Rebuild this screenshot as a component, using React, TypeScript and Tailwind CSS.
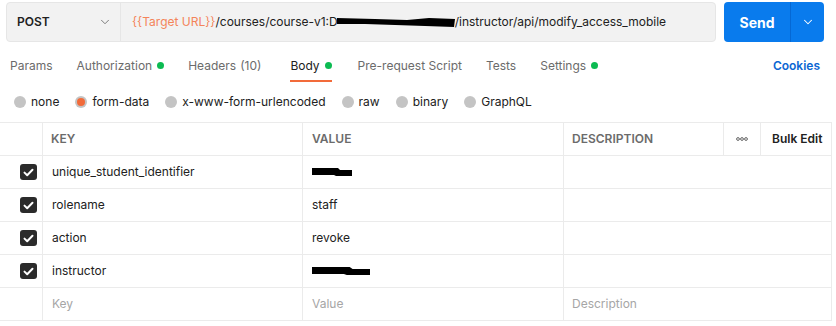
import React from 'react';
import { ChevronDown } from 'lucide-react';

const Dot = () => <span className="ml-[5px] inline-block h-[7px] w-[7px] rounded-full bg-[#0cbb52]" />;

const Tab = ({ label, active, dot, extra, cls = '' }: { label: string; active?: boolean; dot?: boolean; extra?: string; cls?: string }) => (
  <div className={`flex h-full items-center border-b-2 pt-[1px] ${cls} ${active ? 'border-[#f26b3a] text-[#212121]' : 'border-transparent text-[#6b6b6b]'}`}>
    <span>{label}</span>
    {extra && <span className="ml-[4px]">{extra}</span>}
    {dot && <Dot />}
  </div>
);

const Radio = ({ label, checked }: { label: string; checked?: boolean }) => (
  <label className="flex items-center gap-[5px]">
    <span className="flex h-[12px] w-[12px] items-center justify-center rounded-full bg-[#c4c4c4]">
      {checked && <span className="h-[8px] w-[8px] rounded-full bg-[#f26b3a]" />}
    </span>
    <span>{label}</span>
  </label>
);

const Check = () => (
  <span className="flex h-[16px] w-[17px] items-center justify-center rounded-[3px] bg-[#2b2b2b]">
    <svg width="11" height="9" viewBox="0 0 11 9" fill="none">
      <path d="M1.5 4.6 4.2 7.2 9.5 1.8" stroke="white" strokeWidth="2" strokeLinecap="round" strokeLinejoin="round" />
    </svg>
  </span>
);

const Redact = ({ w }: { w: number }) => (
  <svg width={w} height="10" viewBox={`0 0 ${w} 10`}>
    <path d={`M0 1 L${w * 0.65} 1 L${w * 0.7} 3 L${w} 3 L${w} 9 L${w * 0.6} 9 L${w * 0.55} 8 L0 8 Z`} fill="black" />
  </svg>
);

const rows = [
  { key: 'unique_student_identifier', value: null as string | null, redact: 40 },
  { key: 'rolename', value: 'staff' },
  { key: 'action', value: 'revoke' },
  { key: 'instructor', value: null, redact: 58 },
];

export default function App() {
  return (
    <div className="h-[326px] w-[836px] bg-white text-[12px] text-[#212121]" style={{ fontFamily: 'Inter, "Liberation Sans", sans-serif' }}>
      {/* request bar */}
      <div className="flex gap-[8px] pl-[6px] pt-[2px]">
        <div className="flex h-[40px] w-[710px] rounded-[4px] border border-[#e6e6e6] bg-[#f2f2f2]">
          <div className="flex w-[114px] items-center justify-between border-r border-[#e6e6e6] pl-[10px] pr-[8px]">
            <span className="text-[12px] font-semibold text-[#212121]">POST</span>
            <ChevronDown size={14} strokeWidth={1.5} className="text-[#6b6b6b]" />
          </div>
          <div className="flex items-center whitespace-nowrap pl-[11px]">
            <span className="text-[#f4845a]">{'{{Target URL}}'}</span>
            <span>/courses/course-v1:D</span>
            <svg width="118" height="14" viewBox="0 0 118 14" className="-ml-[1px]">
              <path d="M0 3 L38 4 L70 5 L92 3 L118 4 L117 12 L88 11 L58 10 L28 9 L0 9 Z" fill="black" />
            </svg>
            <span>/instructor/api/modify_access_mobile</span>
          </div>
        </div>
        <div className="flex h-[40px] w-[100px] rounded-[4px] bg-[#097bed] text-white">
          <div className="flex w-[67px] items-center justify-center border-r border-[#0568d4] text-[14px] font-bold">Send</div>
          <div className="flex flex-1 items-center justify-center">
            <ChevronDown size={14} strokeWidth={1.8} />
          </div>
        </div>
      </div>

      {/* tabs */}
      <div className="mt-[8px] flex h-[32px] items-stretch justify-between pl-[10px] pr-[16px]">
        <div className="flex items-stretch gap-[24px]">
          <Tab label="Params" />
          <Tab label="Authorization" dot />
          <Tab label="Headers" extra="(10)" cls="mr-[5px]" />
          <Tab label="Body" active dot cls="mr-[2px]" />
          <Tab label="Pre-request Script" />
          <Tab label="Tests" />
          <Tab label="Settings" dot />
        </div>
        <div className="flex items-center pb-[1px] font-semibold text-[#0b66d3]">Cookies</div>
      </div>

      {/* body type */}
      <div className="flex h-[40px] items-center gap-[16px] pl-[14px]">
        <Radio label="none" />
        <Radio label="form-data" checked />
        <Radio label="x-www-form-urlencoded" />
        <Radio label="raw" />
        <Radio label="binary" />
        <Radio label="GraphQL" />
      </div>

      {/* table */}
      <div className="w-[832px] border-t border-[#ebebeb]">
        <div className="flex h-[33px] border-b border-[#ebebeb] text-[12px] font-semibold text-[#6b6b6b]">
          <div className="w-[43px] border-r border-[#ebebeb]" />
          <div className="flex w-[260px] items-center border-r border-[#ebebeb] pl-[8px]">KEY</div>
          <div className="flex w-[261px] items-center border-r border-[#ebebeb] pl-[9px]">VALUE</div>
          <div className="flex w-[160px] items-center border-r border-[#ebebeb] pl-[8px]">DESCRIPTION</div>
          <div className="flex w-[37px] items-center justify-center border-r border-[#ebebeb]">
            <svg width="12" height="4" viewBox="0 0 12 4" fill="none" stroke="#555" strokeWidth="0.9">
              <circle cx="2" cy="2" r="1.4" />
              <circle cx="6" cy="2" r="1.4" />
              <circle cx="10" cy="2" r="1.4" />
            </svg>
          </div>
          <div className="flex w-[71px] items-center border-r border-[#ebebeb] pl-[11px] text-[#212121]">Bulk Edit</div>
        </div>
        {rows.map((r) => (
          <div key={r.key} className="flex h-[33px] border-b border-[#ebebeb]">
            <div className="flex w-[43px] items-center border-r border-[#ebebeb] pl-[20px]">
              <Check />
            </div>
            <div className="flex w-[260px] items-center border-r border-[#ebebeb] pl-[9px]">{r.key}</div>
            <div className="flex w-[261px] items-center border-r border-[#ebebeb] pl-[9px]">
              {r.value ?? <Redact w={r.redact ?? 40} />}
            </div>
            <div className="w-[268px] border-r border-[#ebebeb]" />
          </div>
        ))}
        <div className="flex h-[33px] border-b border-[#ebebeb] text-[#a6a6a6]">
          <div className="w-[43px] border-r border-[#ebebeb]" />
          <div className="flex w-[260px] items-center border-r border-[#ebebeb] pl-[9px]">Key</div>
          <div className="flex w-[261px] items-center border-r border-[#ebebeb] pl-[9px]">Value</div>
          <div className="flex w-[268px] items-center border-r border-[#ebebeb] pl-[8px]">Description</div>
        </div>
      </div>
    </div>
  );
}
